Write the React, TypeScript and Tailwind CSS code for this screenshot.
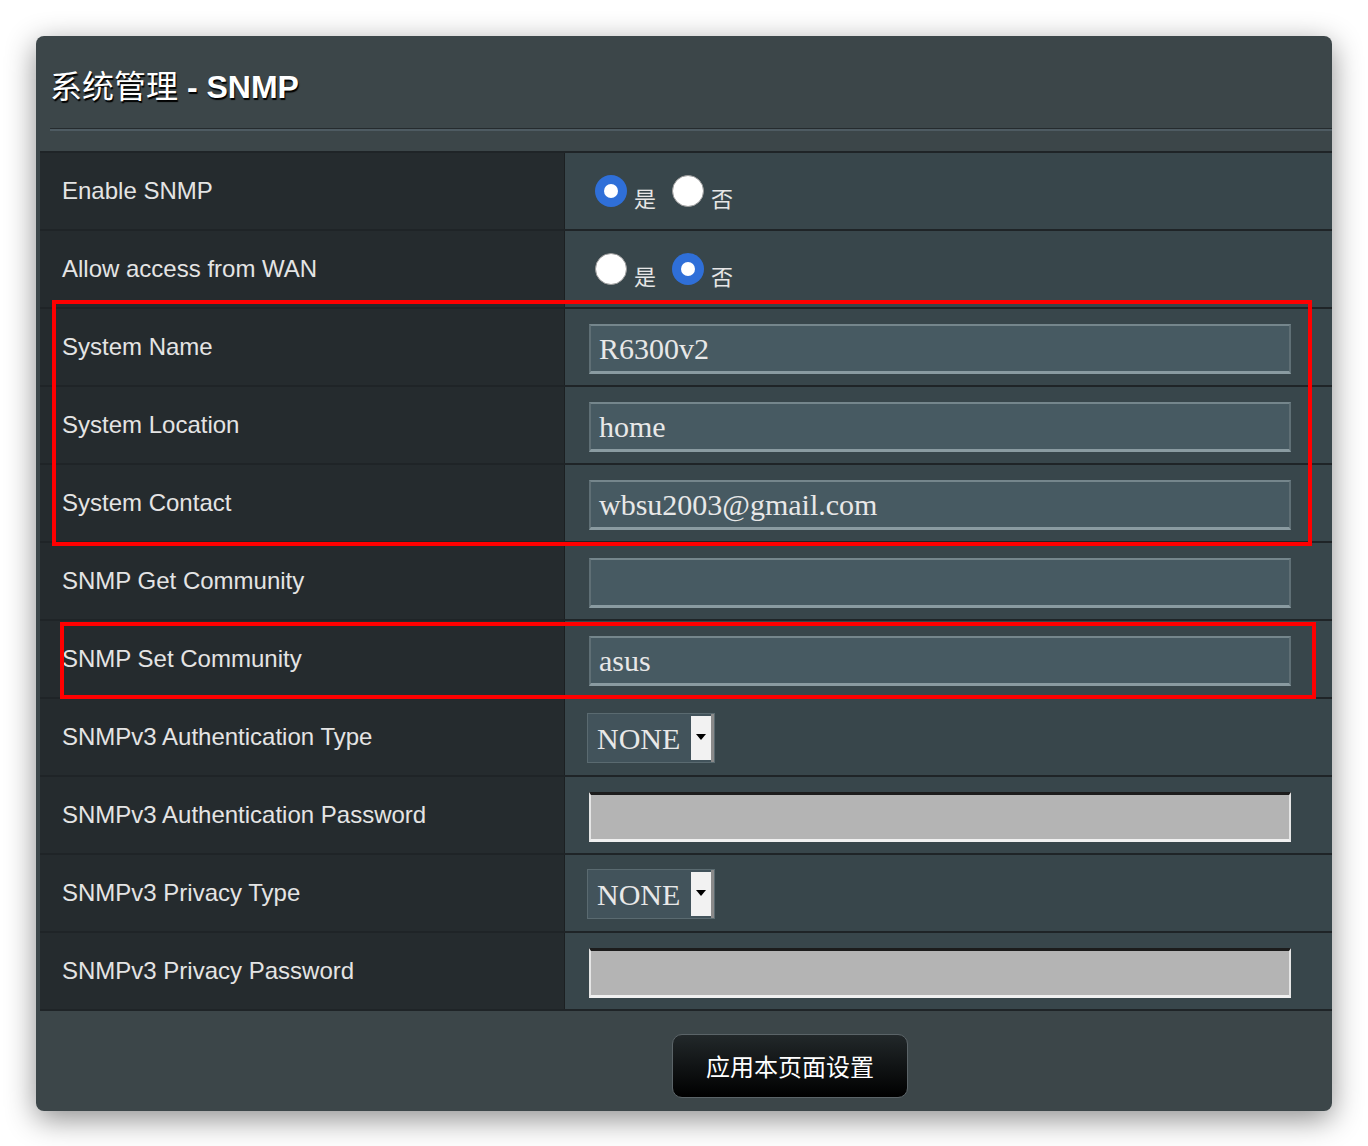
import React from "react";

const rows: { label: string; kind: string; value?: string; checked?: number }[] = [
  { label: "Enable SNMP", kind: "radio", checked: 0 },
  { label: "Allow access from WAN", kind: "radio", checked: 1 },
  { label: "System Name", kind: "text", value: "R6300v2" },
  { label: "System Location", kind: "text", value: "home" },
  { label: "System Contact", kind: "text", value: "wbsu2003@gmail.com" },
  { label: "SNMP Get Community", kind: "text", value: "" },
  { label: "SNMP Set Community", kind: "text", value: "asus" },
  { label: "SNMPv3 Authentication Type", kind: "select" },
  { label: "SNMPv3 Authentication Password", kind: "disabled" },
  { label: "SNMPv3 Privacy Type", kind: "select" },
  { label: "SNMPv3 Privacy Password", kind: "disabled" },
];

function Radio({ on }: { on: boolean }) {
  return on ? (
    <span className="flex h-[32px] w-[32px] shrink-0 items-center justify-center rounded-full bg-[#2f6fd8]">
      <span className="block h-[14px] w-[14px] rounded-full bg-white" />
    </span>
  ) : (
    <span className="block h-[32px] w-[32px] shrink-0 rounded-full border border-[#9a9a9a] bg-white" />
  );
}

function Field({ kind, value, checked }: { kind: string; value?: string; checked?: number }) {
  if (kind === "radio") {
    return (
      <div className="flex items-center pl-[30px] font-['Noto_Sans_CJK_SC',sans-serif] text-[22px] text-[#e6e6e6]">
        <Radio on={checked === 0} />
        <span className="ml-[7px] mt-[12px]">是</span>
        <span className="ml-[16px]">
          <Radio on={checked === 1} />
        </span>
        <span className="ml-[7px] mt-[12px]">否</span>
      </div>
    );
  }
  if (kind === "select") {
    return (
      <div className="ml-[22px] mt-[2px] flex h-[50px] w-[128px] items-stretch border border-[#5a6a70] bg-[#42535b]">
        <span className="flex flex-1 items-center pl-[9px] font-['Liberation_Serif',serif] text-[30px] text-[#e8e8e8]">NONE</span>
        <span className="my-[2px] flex w-[20px] items-center justify-center bg-[#f2f2f2]">
          <span className="mb-[2px] h-0 w-0 border-x-[5px] border-t-[6px] border-x-transparent border-t-black" />
        </span>
        <span className="w-[3px] bg-[#8a8a8a]" />
      </div>
    );
  }
  if (kind === "disabled") {
    return (
      <div className="ml-[24px] mt-[4px] h-[50px] w-[702px] border-[2px] border-b-[3px] border-t-[3px] border-l-[#e5e5e5] border-r-[#e5e5e5] border-t-[#1c1c1c] border-b-[#f0f0f0] bg-[#b4b4b4]" />
    );
  }
  return (
    <div className="ml-[24px] mt-[4px] flex h-[50px] w-[702px] items-center border-[2px] border-b-[3px] border-x-[#5f6f75] border-t-[#75868c] border-b-[#8a9ba1] bg-[#475a62] pl-[8px] font-['Liberation_Serif',serif] text-[30px] text-[#e8e8e8]">
      {value}
    </div>
  );
}

export default function App() {
  return (
    <div className="min-h-[1146px] bg-white pl-[36px] pt-[36px]">
      <div className="relative w-[1296px] rounded-[8px] bg-[#3c4649] shadow-[0_8px_30px_rgba(0,0,0,0.45)]">
        <div className="flex h-[92px] items-center pl-[14px] pt-[10px]">
          <h1 className="font-['Liberation_Sans','Noto_Sans_CJK_SC',sans-serif] text-[32px] font-bold text-white [text-shadow:1px_2px_1px_#000]">
            <span className="font-normal">系统管理</span> - SNMP
          </h1>
        </div>
        <div className="ml-[14px] h-[1px] bg-[#252b2e]" />
        <div className="ml-[14px] h-[2px] bg-[#4e5b62]" />
        <div className="mt-[20px] ml-[4px] border-t-[2px] border-[#1f2427]">
          {rows.map((r) => (
            <div key={r.label} className="flex h-[78px] border-b-[2px] border-[#1f2427]">
              <div className="flex w-[525px] items-center border-r-[1px] border-[#1c2022] bg-[#252b2e] pl-[22px] font-['Liberation_Sans',sans-serif] text-[24px] text-[#e4e4e4]">
                {r.label}
              </div>
              <div className="flex flex-1 items-center bg-[#38464b]">
                <Field kind={r.kind} value={r.value} checked={r.checked} />
              </div>
            </div>
          ))}
        </div>
        <div className="flex h-[100px] items-start pl-[636px] pt-[23px]">
          <button className="flex h-[64px] w-[236px] items-center justify-center rounded-[10px] border border-[#5b6468] bg-[linear-gradient(#22282a,#000)] font-['Noto_Sans_CJK_SC',sans-serif] text-[24px] text-white">
            应用本页面设置
          </button>
        </div>
        <div className="pointer-events-none absolute left-[16px] top-[264px] h-[246px] w-[1260px] border-[4px] border-[#ff0000]" />
        <div className="pointer-events-none absolute left-[24px] top-[586px] h-[77px] w-[1256px] border-[4px] border-[#ff0000]" />
      </div>
    </div>
  );
}
